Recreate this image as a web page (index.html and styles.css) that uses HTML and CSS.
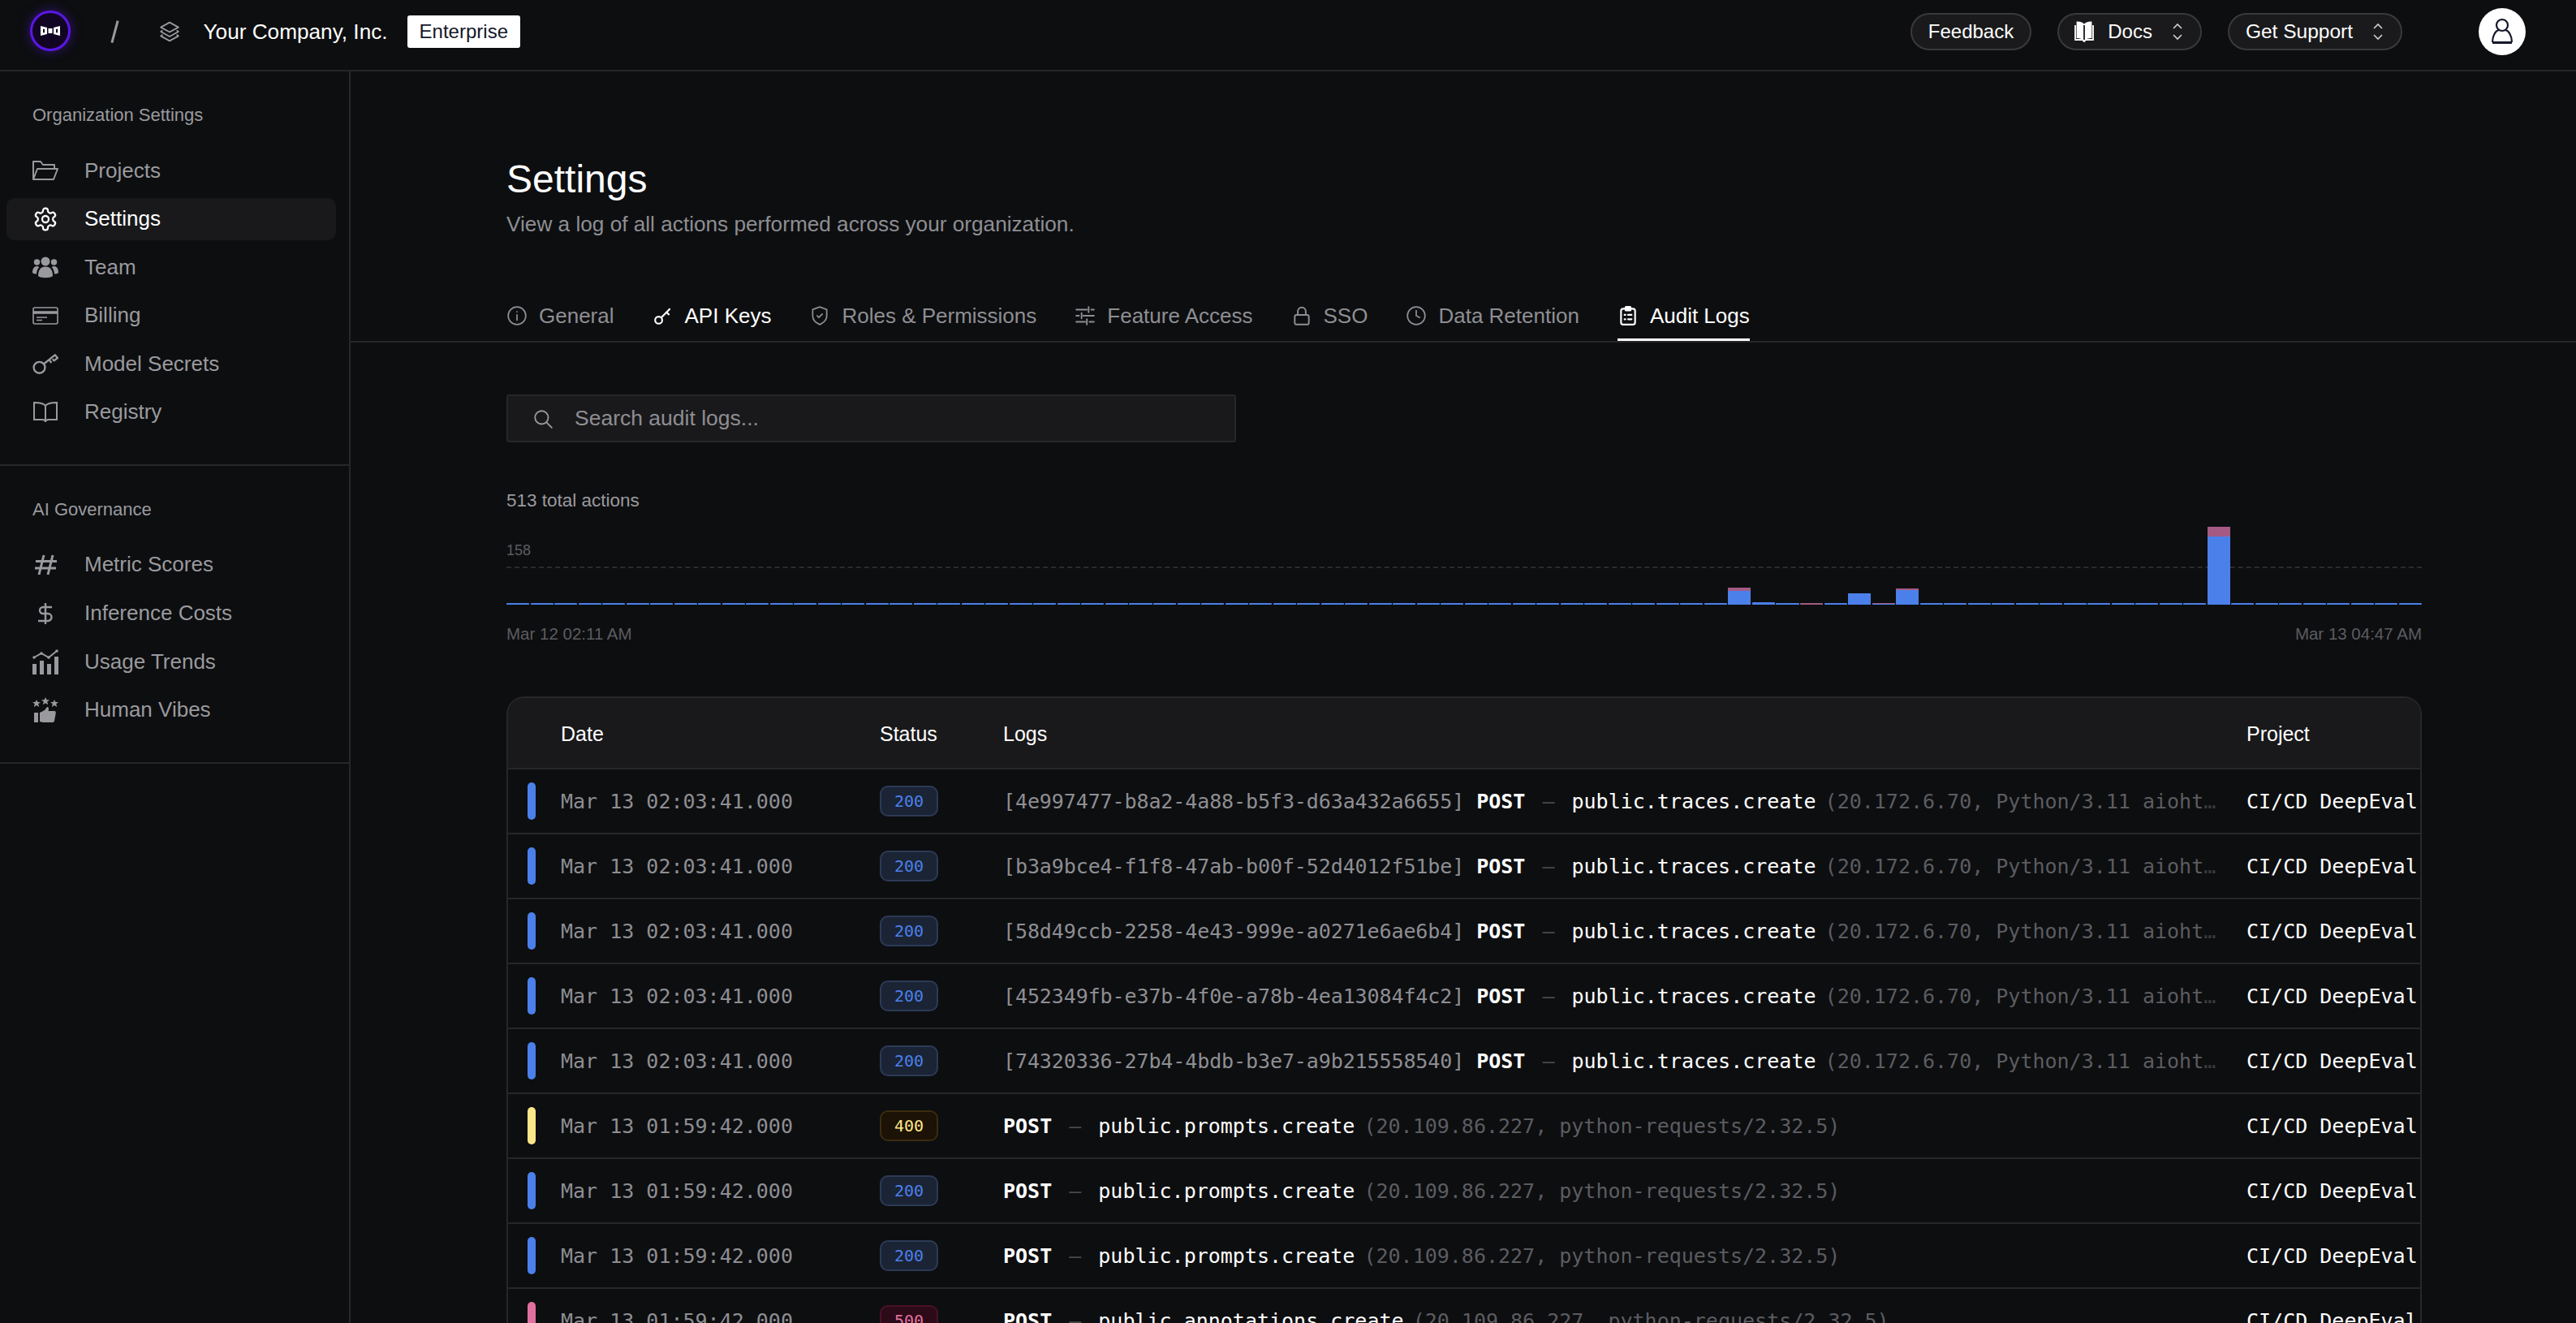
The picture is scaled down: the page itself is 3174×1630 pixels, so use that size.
FILE: index.html
```html
<!DOCTYPE html>
<html lang="en">
<head>
<meta charset="utf-8">
<title>Settings</title>
<link rel="stylesheet" href="styles.css">
</head>
<body>
<div class="app">
  <header class="topbar">
    <div class="brand">
      <div class="logo"><svg width="24" height="14" viewBox="0 0 24 14"><path fill="#fff" fill-rule="evenodd" d="M0 1l8 2v8l-8 2zM3 4.500v5l2-.5v-4zM24 1l-8 2v8l8 2zM21 4.500v5l-2-.5v-4zM9.500 4h5v6h-5z"/></svg></div>
      <span class="slash"></span>
      <svg class="layers" width="26" height="26" viewBox="0 0 24 24" fill="none" stroke="#9a9a9e" stroke-width="1.700" stroke-linejoin="round"><path d="M12 1.500 22 7l-10 5.500L2 7z"/><path d="m4 10.500-2 1.500 10 5.500 10-5.500-2-1.500"/><path d="m4 15.500-2 1.500 10 5.500 10-5.500-2-1.500"/></svg>
      <span class="company">Your Company, Inc.</span>
      <span class="plan">Enterprise</span>
    </div>
    <div class="top-actions">
      <button class="pill">Feedback</button>
      <button class="pill pill-docs"><svg width="26" height="28" viewBox="0 0 26 28" fill="none" stroke="#fff" stroke-width="1.800"><path d="M13 6C11 3 8 2.500 4.500 2.500V21C8 21 11 22 13 24 15 22 18 21 21.500 21V2.500C18 2.500 15 3 13 6z" fill="#fff"/><path d="M13 6v18" stroke="#1a1a1c"/><path d="M2 6v18h9l2 2 2-2h9V6"/></svg><span>Docs</span><svg class="updown" width="16" height="28" viewBox="0 0 16 28" fill="none" stroke="#cfcfd2" stroke-width="1.600"><path d="m3 10 5-5 5 5M3 18l5 5 5-5"/></svg></button>
      <button class="pill pill-support"><span>Get Support</span><svg class="updown" width="16" height="28" viewBox="0 0 16 28" fill="none" stroke="#cfcfd2" stroke-width="1.600"><path d="m3 10 5-5 5 5M3 18l5 5 5-5"/></svg></button>
      <div class="avatar"><svg width="28" height="34" viewBox="0 0 28 34" fill="none" stroke="#15182b" stroke-width="2.200"><circle cx="14" cy="9" r="7"/><path d="M2 30c0-8 4-14.500 8-15M26 30c0-8-4-14.500-8-15"/><path d="M2 30.500h24" stroke-width="3"/></svg></div>
    </div>
  </header>

  <aside class="sidebar">
    <section class="side-section">
      <h3 class="side-label">Organization Settings</h3>
      <nav class="side-nav">
        <a class="side-item"><svg class="side-icon" viewBox="0 0 32 26" fill="none" stroke="currentColor" stroke-width="2" stroke-linejoin="round"><path d="M1 24V2h9l3 4h14v5"/><path d="M1 24 6 11h25l-5 13z"/></svg><span>Projects</span></a>
        <a class="side-item active"><svg class="side-icon" viewBox="0 0 24 24" fill="none" stroke="currentColor" stroke-width="1.700" stroke-linecap="round" stroke-linejoin="round"><path d="M12.220 2h-.44a2 2 0 0 0-2 2v.18a2 2 0 0 1-1 1.730l-.43.25a2 2 0 0 1-2 0l-.15-.08a2 2 0 0 0-2.730.73l-.22.38a2 2 0 0 0 .73 2.730l.15.1a2 2 0 0 1 1 1.720v.51a2 2 0 0 1-1 1.740l-.15.09a2 2 0 0 0-.73 2.730l.22.38a2 2 0 0 0 2.730.73l.15-.08a2 2 0 0 1 2 0l.43.25a2 2 0 0 1 1 1.730V20a2 2 0 0 0 2 2h.44a2 2 0 0 0 2-2v-.18a2 2 0 0 1 1-1.730l.43-.25a2 2 0 0 1 2 0l.15.08a2 2 0 0 0 2.730-.73l.22-.39a2 2 0 0 0-.73-2.730l-.15-.08a2 2 0 0 1-1-1.740v-.5a2 2 0 0 1 1-1.740l.15-.09a2 2 0 0 0 .73-2.730l-.22-.38a2 2 0 0 0-2.730-.73l-.15.08a2 2 0 0 1-2 0l-.43-.25a2 2 0 0 1-1-1.730V4a2 2 0 0 0-2-2z"/><circle cx="12" cy="12" r="3"/></svg><span>Settings</span></a>
        <a class="side-item"><svg class="side-icon" viewBox="0 0 32 26" fill="currentColor"><circle cx="16" cy="6" r="5.500"/><circle cx="5.500" cy="7" r="3.700"/><circle cx="26.500" cy="7" r="3.700"/><path d="M7 24c0-7 3-11.500 9-11.500S25 17 25 24c-3 3-15 3-18 0z"/><path d="M0 20c0-5 2-8 5.500-8 1 0 2 .3 2.800 1C6 15.500 5.200 18 5 21.500 3 21.500 1 21 0 20zM32 20c0-5-2-8-5.500-8-1 0-2 .3-2.800 1 2.300 2.500 3.100 5 3.300 8.500 2 0 4-.5 5-1.500z"/></svg><span>Team</span></a>
        <a class="side-item"><svg class="side-icon" viewBox="0 0 32 22" fill="none" stroke="currentColor" stroke-width="1.600"><rect x="1" y="1" width="30" height="20" rx="2"/><path d="M1 7h30" stroke-width="3.500"/><path d="M5 13h13M5 16.500h7"/></svg><span>Billing</span></a>
        <a class="side-item"><svg class="side-icon" viewBox="0 0 30 24" fill="none" stroke="currentColor" stroke-width="2.200" stroke-linejoin="round"><circle cx="8" cy="16.500" r="6.500"/><path d="M13 12.500 26 2l3 3.500-4 3-2-1.500M19.500 8l2.500 3"/></svg><span>Model Secrets</span></a>
        <a class="side-item"><svg class="side-icon" viewBox="0 0 32 28" fill="none" stroke="currentColor" stroke-width="2"><path d="M16 6C14 3 10 2 2 2v21h10c2 0 4 1 4 3 0-2 2-3 4-3h10V2c-8 0-12 1-14 4zM16 6v20"/></svg><span>Registry</span></a>
      </nav>
    </section>
    <section class="side-section">
      <h3 class="side-label">AI Governance</h3>
      <nav class="side-nav">
        <a class="side-item"><svg class="side-icon" viewBox="0 0 32 26" fill="none" stroke="currentColor" stroke-width="3"><path d="M14 1 8 25M25 1l-6 24M4 8.500h26M3 17h26"/></svg><span>Metric Scores</span></a>
        <a class="side-item"><svg class="side-icon" viewBox="0 0 32 32" fill="none" stroke="currentColor" stroke-width="2.400"><path d="M16 3v26M24 8H13a4 4 0 0 0 0 8h6a4 4 0 0 1 0 9H7"/></svg><span>Inference Costs</span></a>
        <a class="side-item"><svg class="side-icon" viewBox="0 0 32 32" fill="currentColor"><rect x="0" y="19" width="5" height="13"/><rect x="9" y="15" width="5" height="17"/><rect x="18" y="19" width="5" height="13"/><rect x="27" y="10" width="5" height="22"/><path d="M2 11l9-5 9 5 10-8" fill="none" stroke="currentColor" stroke-width="2"/><circle cx="2" cy="11" r="1.800"/><circle cx="11" cy="6" r="1.800"/><circle cx="20" cy="11" r="1.800"/><circle cx="30" cy="3" r="1.800"/></svg><span>Usage Trends</span></a>
        <a class="side-item"><svg class="side-icon" viewBox="0 0 32 32" fill="currentColor"><path d="m5 3 1.400 3H10L7.200 8.300 8.200 12 5 10l-3.200 2 1-3.700L0 6h3.600zM16 0l1.500 3.300h3.600l-2.900 2.300 1 3.700L16 7.300l-3.200 2 1-3.700-2.900-2.300h3.600zM27 3l1.400 3H32l-2.800 2.300 1 3.700L27 10l-3.200 2 1-3.700L22 6h3.600z"/><rect x="2" y="19" width="5" height="12"/><path d="M9 19l6-3 3-4c2 0 2.500 2 1.500 5H27c2 0 2 2 1.500 4l-1.500 8c-.3 1.500-1 2-3 2H13l-4-1z"/></svg><span>Human Vibes</span></a>
      </nav>
    </section>
  </aside>

  <main class="main">
    <div class="page-head">
      <h1 class="page-title">Settings</h1>
      <p class="page-sub">View a log of all actions performed across your organization.</p>
    </div>
    <div class="tabs">
      <a class="tab"><svg class="tab-icon" viewBox="0 0 24 24" fill="none" stroke="currentColor" stroke-width="1.600" stroke-linecap="round"><circle cx="12" cy="12" r="10"/><path d="M12 11v6M12 7.500v.01"/></svg>General</a>
      <a class="tab tab-white"><svg class="tab-icon" viewBox="0 0 24 24" fill="none" stroke="currentColor" stroke-width="2"><circle cx="7" cy="17" r="4"/><path d="m10 14 10-10M16 8l3 3"/></svg>API Keys</a>
      <a class="tab"><svg class="tab-icon" viewBox="0 0 24 24" fill="none" stroke="currentColor" stroke-width="1.600" stroke-linejoin="round" stroke-linecap="round"><path d="M12 2 4 5v7c0 5 3.500 8 8 10 4.500-2 8-5 8-10V5z"/><path d="m9 12 2 2 4-4"/></svg>Roles &amp; Permissions</a>
      <a class="tab"><svg class="tab-icon" viewBox="0 0 24 24" fill="none" stroke="currentColor" stroke-width="1.800" stroke-linecap="round"><path d="M2 5h12M19 5h3M2 12h3M10 12h12M2 19h10M17 19h5M16 2v6M8 9v6M14 16v6"/></svg>Feature Access</a>
      <a class="tab"><svg class="tab-icon" viewBox="0 0 24 24" fill="none" stroke="currentColor" stroke-width="1.800" stroke-linejoin="round"><rect x="4" y="11" width="16" height="11" rx="2"/><path d="M7.500 11V7a4.500 4.500 0 0 1 9 0v4"/></svg>SSO</a>
      <a class="tab"><svg class="tab-icon" viewBox="0 0 24 24" fill="none" stroke="currentColor" stroke-width="1.600" stroke-linecap="round"><circle cx="12" cy="12" r="10"/><path d="M12 6v6l4 2"/></svg>Data Retention</a>
      <a class="tab tab-active"><svg class="tab-icon" viewBox="0 0 24 24" fill="none" stroke="currentColor" stroke-width="2" stroke-linecap="round"><rect x="4" y="4" width="16" height="18" rx="2.500"/><rect x="9" y="2" width="6" height="4" rx="1" fill="currentColor"/><path d="M8 11h1M12 11h4M8 16h1M12 16h4"/></svg>Audit Logs</a>
    </div>

    <div class="content">
      <label class="search">
        <svg width="26" height="26" viewBox="0 0 24 24" fill="none" stroke="#9a9a9e" stroke-width="1.700" stroke-linecap="round"><circle cx="10.500" cy="10.500" r="7.500"/><path d="m16 16 6 6"/></svg>
        <span>Search audit logs...</span>
      </label>

      <div class="total">513 total actions</div>
      <div class="chart">
        <span class="chart-tick">158</span>
        <span class="chart-line"></span>
        <div class="bars">
          <i></i><i></i><i></i><i></i><i></i><i></i><i></i><i></i><i></i><i></i>
          <i></i><i></i><i></i><i></i><i></i><i></i><i></i><i></i><i></i><i></i>
          <i></i><i></i><i></i><i></i><i></i><i></i><i></i><i></i><i></i><i></i>
          <i></i><i></i><i></i><i></i><i></i><i></i><i></i><i></i><i></i><i></i>
          <i></i><i></i><i></i><i></i><i></i><i></i><i></i><i></i><i></i><i></i>
          <i></i>
          <i class="stack" style="height:21px"><b style="height:4px"></b><u></u></i>
          <i style="height:3px"></i>
          <i></i>
          <i class="stack" style="height:2px"><b style="height:2px"></b></i>
          <i></i>
          <i style="height:14px"></i>
          <i class="stack" style="height:2px"><b style="height:1px"></b><u></u></i>
          <i class="stack" style="height:20px"><b style="height:2px"></b><u></u></i>
          <i></i><i></i><i></i><i></i><i></i><i></i><i></i><i></i><i></i><i></i><i></i><i></i>
          <i class="stack" style="height:96px"><b style="height:12px"></b><u></u></i>
          <i></i><i></i><i></i><i></i><i></i><i></i><i></i><i></i>
        </div>
      </div>
      <div class="axis"><span>Mar 12 02:11 AM</span><span>Mar 13 04:47 AM</span></div>

      <div class="table">
        <div class="row head">
          <div></div><div>Date</div><div>Status</div><div>Logs</div><div>Project</div>
        </div>
        <div class="row"><div><span class="mark blue"></span></div><div class="date">Mar 13 02:03:41.000</div><div><span class="code c200">200</span></div><div class="log"><span class="uid">[4e997477-b8a2-4a88-b5f3-d63a432a6655]</span> <b>POST</b><span class="dash">–</span><span class="fn">public.traces.create</span> <span class="meta">(20.172.6.70, Python/3.11 aiohttp/3.9.5)</span></div><div class="proj">CI/CD DeepEval</div></div>
        <div class="row"><div><span class="mark blue"></span></div><div class="date">Mar 13 02:03:41.000</div><div><span class="code c200">200</span></div><div class="log"><span class="uid">[b3a9bce4-f1f8-47ab-b00f-52d4012f51be]</span> <b>POST</b><span class="dash">–</span><span class="fn">public.traces.create</span> <span class="meta">(20.172.6.70, Python/3.11 aiohttp/3.9.5)</span></div><div class="proj">CI/CD DeepEval</div></div>
        <div class="row"><div><span class="mark blue"></span></div><div class="date">Mar 13 02:03:41.000</div><div><span class="code c200">200</span></div><div class="log"><span class="uid">[58d49ccb-2258-4e43-999e-a0271e6ae6b4]</span> <b>POST</b><span class="dash">–</span><span class="fn">public.traces.create</span> <span class="meta">(20.172.6.70, Python/3.11 aiohttp/3.9.5)</span></div><div class="proj">CI/CD DeepEval</div></div>
        <div class="row"><div><span class="mark blue"></span></div><div class="date">Mar 13 02:03:41.000</div><div><span class="code c200">200</span></div><div class="log"><span class="uid">[452349fb-e37b-4f0e-a78b-4ea13084f4c2]</span> <b>POST</b><span class="dash">–</span><span class="fn">public.traces.create</span> <span class="meta">(20.172.6.70, Python/3.11 aiohttp/3.9.5)</span></div><div class="proj">CI/CD DeepEval</div></div>
        <div class="row"><div><span class="mark blue"></span></div><div class="date">Mar 13 02:03:41.000</div><div><span class="code c200">200</span></div><div class="log"><span class="uid">[74320336-27b4-4bdb-b3e7-a9b215558540]</span> <b>POST</b><span class="dash">–</span><span class="fn">public.traces.create</span> <span class="meta">(20.172.6.70, Python/3.11 aiohttp/3.9.5)</span></div><div class="proj">CI/CD DeepEval</div></div>
        <div class="row"><div><span class="mark yellow"></span></div><div class="date">Mar 13 01:59:42.000</div><div><span class="code c400">400</span></div><div class="log"><b>POST</b><span class="dash">–</span><span class="fn">public.prompts.create</span> <span class="meta">(20.109.86.227, python-requests/2.32.5)</span></div><div class="proj">CI/CD DeepEval</div></div>
        <div class="row"><div><span class="mark blue"></span></div><div class="date">Mar 13 01:59:42.000</div><div><span class="code c200">200</span></div><div class="log"><b>POST</b><span class="dash">–</span><span class="fn">public.prompts.create</span> <span class="meta">(20.109.86.227, python-requests/2.32.5)</span></div><div class="proj">CI/CD DeepEval</div></div>
        <div class="row"><div><span class="mark blue"></span></div><div class="date">Mar 13 01:59:42.000</div><div><span class="code c200">200</span></div><div class="log"><b>POST</b><span class="dash">–</span><span class="fn">public.prompts.create</span> <span class="meta">(20.109.86.227, python-requests/2.32.5)</span></div><div class="proj">CI/CD DeepEval</div></div>
        <div class="row"><div><span class="mark pink"></span></div><div class="date">Mar 13 01:59:42.000</div><div><span class="code c500">500</span></div><div class="log"><b>POST</b><span class="dash">–</span><span class="fn">public.annotations.create</span> <span class="meta">(20.109.86.227, python-requests/2.32.5)</span></div><div class="proj">CI/CD DeepEval</div></div>
      </div>
    </div>
  </main>
</div>
</body>
</html>
```
FILE: styles.css
```css
* { box-sizing: border-box; }
html, body { margin: 0; height: 100%; overflow: hidden; background: #0d0e10; }
body { font-family: "Liberation Sans", Arial, sans-serif; color: #fff; }

.app { display: grid; grid-template-columns: 432px 1fr; grid-template-rows: 88px 1fr; height: 1630px; overflow: hidden; }

.topbar { grid-column: 1 / 3; display: flex; justify-content: space-between; align-items: center; border-bottom: 2px solid #27272a; padding: 0 62px 8px 37px; }
.brand { display: flex; align-items: center; }
.logo { width: 50px; height: 50px; border-radius: 50%; background: #120524; border: 3px solid #5a17e6; box-shadow: 0 0 14px rgba(90, 23, 230, .5); display: flex; align-items: center; justify-content: center; margin-top: -2px; }
.slash { width: 2.500px; height: 28px; background: #9a9a9e; transform: rotate(15deg); margin-left: 53px; }
.layers { margin-left: 53px; }
.company { font-size: 26.200px; margin-left: 29px; }
.plan { background: #fff; color: #15182b; font-size: 24px; border-radius: 3px; height: 40px; margin-left: 24px; padding: 0 15px; display: flex; align-items: center; }

.top-actions { display: flex; align-items: center; }
.pill { height: 46px; background: #1a1a1c; border: 2px solid #3a3a3e; border-radius: 23px; color: #fff; font: inherit; font-size: 24px; display: flex; align-items: center; padding: 0 20px; margin-right: 32px; gap: 14px; }
.pill-docs { padding: 0 20px 0 18px; gap: 16px; }
.updown { margin-left: 7px; }
.pill-support { margin-right: 94px; font-size: 24.500px; gap: 16px; }
.avatar { width: 58px; height: 58px; border-radius: 50%; background: #fff; display: flex; align-items: center; justify-content: center; }

.sidebar { border-right: 2px solid #27272a; }
.side-section { padding: 40px 16px 38px 8px; border-bottom: 2px solid #27272a; }
.side-label { margin: 0 0 28px; padding-left: 32px; font-size: 22px; line-height: 28px; font-weight: 400; color: #9a9a9e; }
.side-nav { display: flex; flex-direction: column; gap: 7.600px; }
.side-item { height: 52px; border-radius: 10px; padding-left: 32px; display: flex; align-items: center; gap: 32px; font-size: 26px; color: #9a9a9e; }
.side-item.active { background: #19191b; color: #fff; }
.side-icon { width: 32px; height: 32px; flex: none; }

.main { min-width: 0; }
.page-head { padding: 105px 0 0 192px; }
.page-title { margin: 0; font-size: 48px; line-height: 56px; font-weight: 400; }
.page-sub { margin: 9px 0 0; font-size: 26.200px; line-height: 36px; color: #8e8e93; }

.tabs { display: flex; gap: 47px; height: 64px; margin-top: 64px; padding-left: 192px; border-bottom: 2px solid #27272a; }
.tab { position: relative; display: flex; align-items: center; gap: 14px; font-size: 26px; color: #8e8e93; }
.tab-white, .tab-active { color: #fff; }
.tab-active::after { content: ""; position: absolute; left: 0; right: 0; bottom: 0; height: 3px; background: #fff; }
.tab-icon { width: 26px; height: 26px; flex: none; }

.content { padding: 64px 190px 0 192px; }

.search { display: flex; align-items: center; gap: 26px; width: 899px; height: 59px; padding-left: 30px; background: #19191b; border: 2px solid #27272a; border-radius: 3px; font-size: 26.500px; color: #8e8e93; }

.total { margin-top: 58px; font-size: 22.500px; line-height: 28px; color: #9a9a9e; }
.chart { position: relative; height: 96px; margin-top: 18px; }
.chart-tick { position: absolute; left: 0; top: 17px; font-size: 18px; line-height: 24px; color: #5c5c60; }
.chart-line { position: absolute; left: 0; right: 0; top: 49px; border-top: 2px dashed #2b2b2e; }
.bars { position: relative; display: grid; grid-template-columns: repeat(80, 1fr); column-gap: 1.500px; align-items: end; height: 100%; }
.bars i { display: flex; flex-direction: column; height: 2px; background: #4b80ea; border-radius: 1px 1px 0 0; overflow: hidden; }
.bars b { display: block; flex: none; background: #a55a84; }
.bars u { display: block; flex: 1; background: #4b80ea; }
.axis { display: flex; justify-content: space-between; margin-top: 22px; font-size: 20.500px; line-height: 28px; color: #5c5c60; }

.table { margin-top: 63px; border: 2px solid #27272a; border-bottom: 0; border-radius: 22px 22px 0 0; overflow: hidden; }
.row { display: grid; grid-template-columns: 65px 393px 152px 1532px 1fr; align-items: center; height: 80px; border-bottom: 2px solid #27272a; font-family: "DejaVu Sans Mono", "Liberation Mono", monospace; font-size: 25px; white-space: nowrap; }
.row > div:first-child { padding-left: 24px; display: flex; align-items: center; }
.head { height: 88px; padding-top: 2px; background: #19191b; font-family: "Liberation Sans", Arial, sans-serif; font-size: 25px; }
.mark { width: 10px; height: 46px; border-radius: 5px; display: block; }
.blue { background: #4b80ea; }
.yellow { background: #fde68a; }
.pink { background: #e0709f; }
.date { color: #8e8e93; }
.code { display: inline-flex; align-items: center; justify-content: center; width: 72px; height: 38px; border-radius: 10px; border: 2px solid; font-size: 20px; }
.c200 { background: #1b2435; border-color: #2c3a55; color: #4b80ea; }
.c400 { background: #1c1205; border-color: #3a2c10; color: #fde68a; }
.c500 { background: #2c0a18; border-color: #4a1228; color: #e0709f; }
.log { overflow: hidden; text-overflow: ellipsis; padding-right: 28px; color: #3a3a3e; }
.uid { color: #8e8e93; letter-spacing: -.1px; }
.log b { color: #fff; font-weight: 700; }
.dash { margin: 0 21px; color: #48484c; }
.fn { color: #fff; }
.meta { color: #5c5c60; margin-left: -4px; }
.proj { color: #fff; overflow: hidden; }
```
